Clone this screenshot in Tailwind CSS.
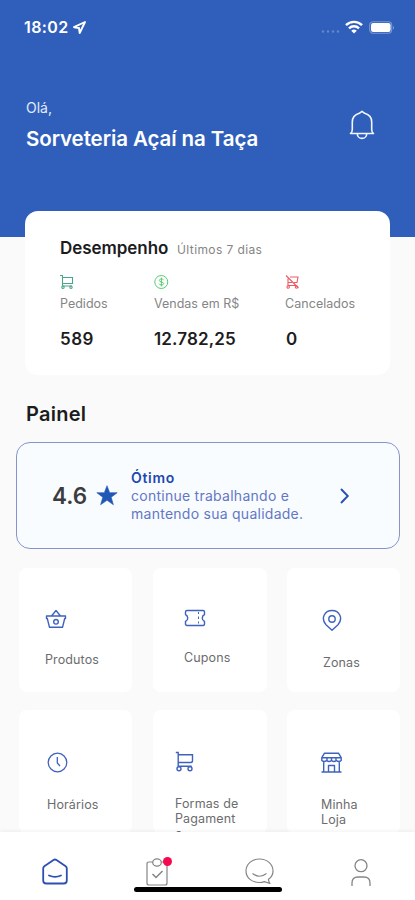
<!DOCTYPE html>
<html lang="pt-BR">
<head>
<meta charset="utf-8">
<meta name="viewport" content="width=device-width, initial-scale=1">
<title>Painel</title>
<script src="https://cdn.jsdelivr.net/npm/@tailwindcss/browser@4"></script>
</head>
<body class="bg-[#fafafa] font-['Inter','Liberation_Sans',sans-serif] text-[#1c1c1e] overflow-hidden">
<div class="relative flex h-[900px] w-[415px] flex-col overflow-hidden whitespace-nowrap">

  <header class="h-[237px] shrink-0 bg-[#305fbb] text-white">
    <div class="flex h-[54px] items-center pl-[24px] pr-[20px]">
      <span class="w-[49px] text-[16px] leading-5 font-semibold tracking-[0.4px]">18:02</span>
      <svg class="h-[13px] w-[13px]" viewBox="0 0 13 13" fill="none" stroke="currentColor" stroke-width="1.9" stroke-linejoin="round"><path d="M12 1L1 6.2l5 .8.7 5z"/></svg>
      <div class="ml-auto flex items-center">
        <svg class="mt-[8px] mr-[5px] h-[3px] w-[19px]" viewBox="0 0 19 3" fill="#6387cd"><circle cx="2" cy="1.5" r="1.2"/><circle cx="7" cy="1.5" r="1.2"/><circle cx="12" cy="1.5" r="1.2"/><circle cx="17" cy="1.5" r="1.2"/></svg>
        <svg class="mr-[6px] h-[14px] w-[18px]" viewBox="0 0 18 14" fill="none" stroke="currentColor" stroke-width="2.4"><path d="M1 5.2a11.3 11.3 0 0 1 16 0M4 8.3a7.1 7.1 0 0 1 10 0"/><path d="M6.2 10.8a4 4 0 0 1 5.6 0L9 13.6z" fill="currentColor" stroke="none"/></svg>
        <svg class="h-[13px] w-[26px]" viewBox="0 0 26 13"><rect x=".7" y=".7" width="22" height="11.6" rx="3.5" fill="none" stroke="#7898d3" stroke-width="1.1"/><rect x="2" y="2" width="19.6" height="9" rx="2.2" fill="#fff"/><path d="M24 4.5q1.6 2 0 4z" fill="#8ea9dc"/></svg>
      </div>
    </div>
    <div class="flex items-start justify-between pt-[44px] pl-[26px] pr-[40px]">
      <div>
        <p class="text-[14px] leading-5 text-[#e4ebf8]">Olá,</p>
        <h1 class="mt-[9px] text-[20.5px] leading-6 font-semibold tracking-[-0.08px]">Sorveteria Açaí na Taça</h1>
      </div>
      <svg class="mt-[12px] h-[30px] w-[26px]" viewBox="0 0 26 30" fill="none" stroke="#f1f5fd" stroke-width="1.6" stroke-linejoin="round" stroke-linecap="round"><path d="M1.500 23.500c1.300-.8 1.800-2 1.800-4V12C3.300 7.500 6 4.500 10.300 3.300L13 1.300l2.700 2C20 4.500 22.700 7.500 22.700 12v7.500c0 2 .5 3.200 1.800 4zM8.300 23.700a4.700 4.700 0 0 0 9.400 0"/></svg>
    </div>
  </header>

  <section class="-mt-[26px] mr-[25px] ml-[25px] h-[164px] shrink-0 rounded-[13px] bg-white pl-[35px]">
    <div class="flex items-center pt-[25px]">
      <h2 class="w-[117px] text-[17px] leading-6 font-semibold tracking-[-0.05px]">Desempenho</h2>
      <span class="mt-[3px] text-[12px] leading-4 tracking-[0.4px] text-[#858585]">Últimos 7 dias</span>
    </div>
    <div class="mt-[14px] grid grid-cols-[94px_131px_auto] text-[12.5px] leading-4 text-[#858585]">
      <div>
        <svg class="h-[16px] w-[14px]" viewBox="0 0 14 16" fill="none" stroke="#4aa58a" stroke-width="1.1"><path d="M0 1.500h2.500V12M2.500 3.500h10v6h-10M2.500 12h9.500"/><circle cx="3" cy="13.200" r="1.200"/><circle cx="11" cy="13.200" r="1.200"/></svg>
        <p class="mt-[6px] tracking-[0px]">Pedidos</p>
        <p class="mt-[15px] text-[17px] leading-6 font-semibold tracking-[0.5px] text-[#1c1c1e]">589</p>
      </div>
      <div>
        <svg class="h-[16px] w-[15px]" viewBox="0 0 15 16" fill="none" stroke="#58cd70" stroke-width="1"><circle cx="7.300" cy="8" r="6.500"/><path d="M9.600 6.200C9.200 5.300 8.500 5 7.400 5c-1.300 0-2.100.6-2.100 1.500 0 2 4.400 1 4.400 3 0 1-.9 1.500-2.300 1.500-1.200 0-2-.5-2.300-1.300M7.400 3.500v9"/></svg>
        <p class="mt-[6px] tracking-[0px]">Vendas em R$</p>
        <p class="mt-[15px] text-[17px] leading-6 font-semibold tracking-[0.15px] text-[#1c1c1e]">12.782,25</p>
      </div>
      <div>
        <svg class="h-[16px] w-[15px]" viewBox="0 0 15 16" fill="none" stroke="#ec5a64" stroke-width="1.100"><path d="M1 1.500l12.500 12.500M5 3h8l-1 5.500H9M3 4.500v7h8M3 8.500h4"/><circle cx="3.200" cy="13" r="1.200"/><circle cx="11.500" cy="13" r="1.200"/></svg>
        <p class="mt-[6px] tracking-[0.05px]">Cancelados</p>
        <p class="mt-[15px] pl-[1px] text-[17px] leading-6 font-semibold text-[#1c1c1e]">0</p>
      </div>
    </div>
  </section>

  <h2 class="mt-[27px] pl-[26px] text-[20px] leading-6 font-semibold tracking-[0.25px]">Painel</h2>

  <section class="mt-[16px] ml-[16px] flex h-[107px] w-[384px] shrink-0 items-center rounded-[14px] border border-[#8694cb] bg-[#f9fcff] pl-[35px]">
    <span class="w-[44px] text-[22.5px] leading-7 font-semibold text-[#3c3c3e]">4.6</span>
    <svg class="h-[21px] w-[22px]" viewBox="0 0 22 20" fill="#2257b5" stroke="#2257b5" stroke-width=".6"><path d="M11 .2l2.700 7h7.500l-6 4.600 2.200 7.400-6.400-4.400-6.400 4.400 2.200-7.400-6-4.600h7.500z"/></svg>
    <div class="ml-[13px] w-[208px] text-[14px] leading-[18px] tracking-[0.26px] text-[#6377c5]">
      <p class="font-semibold tracking-[0.7px] text-[#2148ae]">Ótimo</p>
      <p>continue trabalhando e</p>
      <p>mantendo sua qualidade.</p>
    </div>
    <svg class="h-[16px] w-[11px]" viewBox="0 0 11 16" fill="none" stroke="#2850b0" stroke-width="1.900"><path d="M2 1l6.800 7L2 15"/></svg>
  </section>

  <main class="mt-[19px] ml-[19px] grid w-[381px] shrink-0 grid-cols-[113px_114px_113px] grid-rows-[124px_124px] justify-between gap-y-[18px] text-[12.500px] leading-[15px] tracking-[0.12px] text-[#6c6c6e]">
    <div class="rounded-[8px] bg-white pt-[41px] pl-[26px]">
      <svg class="h-[20px] w-[22px]" viewBox="0 0 22 20" fill="none" stroke="#3f62bd" stroke-width="1.400" stroke-linejoin="round"><path d="M1.500 7h19v2.500h-.8l-2.200 8.800h-13L2.300 9.500H1.500zM6.500 7L11 1.500 15.500 7"/><circle cx="11" cy="12.800" r="2.300"/></svg>
      <p class="mt-[23px]">Produtos</p>
    </div>
    <div class="rounded-[8px] bg-white pt-[40px] pl-[31.500px]">
      <svg class="h-[20px] w-[22px]" viewBox="0 0 22 20" fill="none" stroke="#3f62bd" stroke-width="1.400" stroke-linejoin="round"><path d="M1.500 6.500V4Q1.500 2.500 3 2.500h16Q20.500 2.500 20.500 4v2.500C17.500 8 17.500 12 20.500 13.500V16q0 1.500-1.500 1.500H3Q1.500 17.500 1.500 16V13.500C4.500 12 4.500 8 1.500 6.500z"/><path d="M14.500 4v2m0 2.500v2.500m0 2.500v2" stroke-width="1"/></svg>
      <p class="mt-[22px]">Cupons</p>
    </div>
    <div class="rounded-[8px] bg-white pt-[41px] pl-[35px]">
      <svg class="h-[23px] w-[20px]" viewBox="0 0 20 23" fill="none" stroke="#3f62bd" stroke-width="1.400" stroke-linejoin="round"><path d="M10 21.300L4 15.700C-1.500 9.500 2.500 1.500 10 1.500s11.500 8 6 14.200z"/><circle cx="10" cy="10" r="3.200"/></svg>
      <p class="mt-[23px] pl-[1px]">Zonas</p>
    </div>
    <div class="rounded-[8px] bg-white pt-[42px] pl-[28px]">
      <svg class="h-[21px] w-[21px]" viewBox="0 0 21 21" fill="none" stroke="#3f62bd" stroke-width="1.300"><circle cx="10.500" cy="10.500" r="9.300"/><path d="M10.300 5v6l2.700 3"/></svg>
      <p class="mt-[24px]">Horários</p>
    </div>
    <div class="rounded-[8px] bg-white pt-[41px] pl-[22.500px]">
      <svg class="h-[21px] w-[20px]" viewBox="0 0 20 21" fill="none" stroke="#3f62bd" stroke-width="1.400"><path d="M.8 1.500h2.400V16M3.200 3.700h14.300v6q0 1.800-1.800 1.800H3.200M3.200 15.200h13.500"/><circle cx="4" cy="17.700" r="2"/><circle cx="15" cy="17.700" r="2"/></svg>
      <p class="mt-[24px]">Formas de<br>Pagament<br>o</p>
    </div>
    <div class="rounded-[8px] bg-white pt-[42px] pl-[34px]">
      <svg class="h-[21px] w-[21px]" viewBox="0 0 21 21" fill="none" stroke="#3f62bd" stroke-width="1.400" stroke-linejoin="round"><path d="M3.500 1.200h14l2.700 4.500v2.800q-2.400 2-4.800 0-2.400 2-4.900 0-2.500 2-4.900 0-2.400 2-4.800 0V5.700zM1 5.700h19M6 5.700v3m4.500-3v3m4.500-3v3M2.700 9.500V20m15.600-10.500V20M.5 20h20M7.500 20v-6.500h6V20"/></svg>
      <p class="mt-[24px]">Minha<br>Loja</p>
    </div>
  </main>

  <nav class="absolute inset-x-0 bottom-0 h-[68px] bg-white shadow-[0_-1px_4px_rgba(0,0,0,0.06)]">
    <div class="grid h-full grid-cols-[110px_95px_108px_102px]">
      <svg class="mt-[26px] ml-[42px] h-[27px] w-[26px]" viewBox="0 0 26 27" fill="none" stroke="#2b50b2" stroke-width="1.800" stroke-linejoin="round"><path d="M1.200 10.500Q1.200 9 2.300 8.200L11.500 2q1.500-1 3 0l9.200 6.200q1.100.8 1.100 2.300V22.500q0 3-3 3H4.200q-3 0-3-3z"/><path d="M7 17.500q6 2.800 12 0" stroke-linecap="round"/></svg>
      <div class="relative mt-[24px] ml-[34px] h-[30px] w-[30px]">
        <svg class="h-[30px] w-[28px]" viewBox="0 0 28 30" fill="none" stroke="#858585" stroke-width="1.200"><path d="M9 6H5Q3 6 3 8v19q0 2 2 2h16q2 0 2-2V8q0-2-2-2h-4"/><ellipse cx="13" cy="6.500" rx="4.300" ry="3.600"/><path d="M8.500 18l3.500 3.500 6.500-6.500" stroke-width="1.500"/></svg>
        <span class="absolute top-[1px] left-[19px] h-[9px] w-[9px] rounded-full bg-[#f5094f]"></span>
      </div>
      <svg class="mt-[26px] ml-[40px] h-[28px] w-[29px]" viewBox="0 0 29 28" fill="none" stroke="#858585" stroke-width="1.200" stroke-linejoin="round"><path d="M23.500 21.300C26.500 19.300 28 16.500 28 13 28 6 22 1 14.500 1S1 6 1 13s6 11.500 13.500 11.500c1.800 0 3.300-.3 4.800-.9l5.700 1.900q-1.600-2-1.500-4.200z"/><path d="M7.500 15.500q7 5.500 14 0"/></svg>
      <svg class="mt-[27px] ml-[38px] h-[28px] w-[20px]" viewBox="0 0 20 28" fill="none" stroke="#858585" stroke-width="1.300"><circle cx="10" cy="6.700" r="6"/><path d="M1 27v-3q0-6 6-6h6q6 0 6 6v3"/></svg>
    </div>
    <div class="absolute bottom-[8px] left-[134px] h-[5px] w-[148px] rounded-full bg-black"></div>
  </nav>
</div>
</body>
</html>
